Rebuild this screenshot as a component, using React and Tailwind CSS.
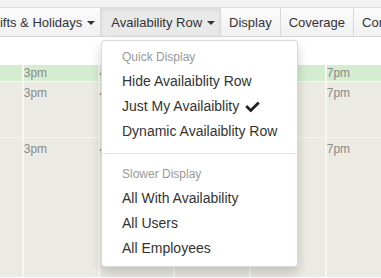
import React from 'react';

const hours = ['2pm', '3pm', '4pm', '5pm', '6pm', '7pm', '8pm'];

const Caret = () => (
    <span className="inline-block ml-[5px] w-0 h-0 border-t-[4px] border-t-[#333] border-x-[4px] border-x-transparent" />
);

const NavButton = ({ label, caret, active, pad }) => (
    <div
        className={
            'h-[28px] pt-[1px] flex items-center border-r border-[#d8d8d8] text-[13px] text-[#333] whitespace-nowrap ' +
            pad +
            (active
                ? ' bg-[#e9e9e9] shadow-[inset_0_2px_4px_rgba(0,0,0,0.07)]'
                : ' bg-gradient-to-b from-[#fbfbfb] to-[#f1f1f1]')
        }
    >
        {label}
        {caret && <Caret />}
    </div>
);

const Row = ({ height, green, grow }) => (
    <div className={'flex ml-[-54px] ' + (grow ? 'flex-1' : '')} style={grow ? undefined : { height }}>
        {hours.map((h) => (
            <div
                key={h}
                className={
                    'w-[75.75px] shrink-0 border-l-2 border-[#f6f6f2] text-[12px] leading-[14px] text-[#8a8a8a] ' +
                    (green ? 'bg-[#d4ecd0] pt-[1px]' : 'bg-[#ebebe3] pt-[4px]')
                }
            >
                {h}
            </div>
        ))}
    </div>
);

const Item = ({ children }) => (
    <div className="px-[20px] py-[3px] leading-[19px] text-[14px] text-[#333] whitespace-nowrap flex items-center">
        {children}
    </div>
);

const Header = ({ children }) => (
    <div className="px-[20px] py-[3px] leading-[17px] text-[12px] text-[#999] whitespace-nowrap">{children}</div>
);

export default function App() {
    return (
        <div className="relative w-[381px] h-[278px] overflow-hidden bg-white font-['Liberation_Sans',Arial,sans-serif]">
            {/* Toolbar */}
            <div className="bg-[#f2f2f2] pt-[7px] border-b border-[#d6d6d6]">
                <div className="flex ml-[-26px] border-t border-[#dcdcdc]">
                    <NavButton label="Shifts & Holidays" caret pad="pl-[10px] pr-[5px]" />
                    <NavButton label="Availability Row" caret active pad="pl-[10px] pr-[5px]" />
                    <NavButton label="Display" pad="px-[8px]" />
                    <NavButton label="Coverage" pad="px-[8px]" />
                    <NavButton label="Configure" pad="px-[8px]" />
                </div>
            </div>

            {/* Schedule grid */}
            <div className="flex flex-col h-[240px]">
                <div className="h-[28px] bg-white" />
                <Row height={16} green />
                <div className="h-[1px] bg-[#f6f6f2]" />
                <Row height={55} />
                <div className="h-[1px] bg-[#f6f6f2]" />
                <Row grow />
            </div>

            {/* Dropdown menu */}
            <div className="absolute left-[101px] top-[40px] w-[197px] bg-white border border-[rgba(0,0,0,0.15)] rounded-[4px] shadow-[0_6px_12px_rgba(0,0,0,0.175)] py-[5px]">
                <Header>Quick Display</Header>
                <Item>Hide Availaiblity Row</Item>
                <Item>
                    Just My Availaiblity
                    <svg viewBox="0 0 512 512" className="w-[15px] h-[14px] ml-[6px] fill-[#222]">
                        <path d="M173.898 439.404l-166.4-166.4c-9.997-9.997-9.997-26.206 0-36.204l36.203-36.204c9.997-9.998 26.207-9.998 36.204 0L192 312.69 432.095 72.596c9.997-9.997 26.207-9.997 36.204 0l36.203 36.204c9.997 9.997 9.997 26.206 0 36.204l-294.4 294.401c-9.998 9.997-26.207 9.997-36.204-.001z" />
                    </svg>
                </Item>
                <Item>Dynamic Availaiblity Row</Item>
                <div className="h-[1px] my-[9px] bg-[#e5e5e5]" />
                <Header>Slower Display</Header>
                <Item>All With Availability</Item>
                <Item>All Users</Item>
                <Item>All Employees</Item>
            </div>
        </div>
    );
}
